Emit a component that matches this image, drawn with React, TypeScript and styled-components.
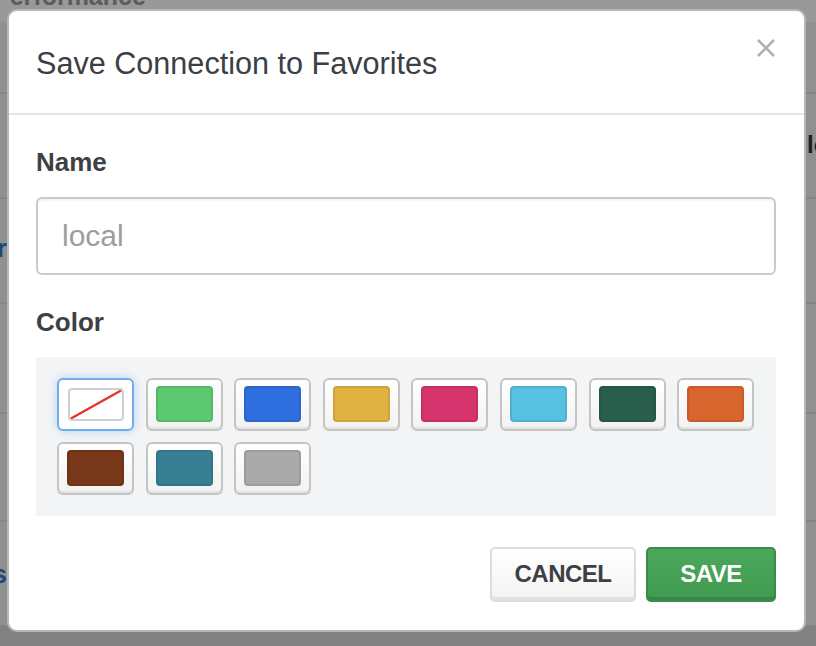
import React from "react";
import styled, { createGlobalStyle } from "styled-components";

const GlobalStyle = createGlobalStyle`
  html, body { margin: 0; padding: 0; width: 816px; height: 646px; overflow: hidden; }
  body { font-family: "Liberation Sans", Arial, Helvetica, sans-serif; background: #fff; }
  * { box-sizing: border-box; }
`;

const Page = styled.div`
  position: relative;
  width: 816px;
  height: 646px;
  overflow: hidden;
  background: #eff0f0;
  display: flex;
  flex-direction: column;
`;

const TopBar = styled.div`
  height: 22px;
  flex: none;
  background: #fff;
  overflow: hidden;
`;

const PageTitle = styled.div`
  margin: -18px 0 0 -7px;
  font-size: 25px;
  line-height: 28px;
  font-weight: 700;
  color: #9a9a9a;
  white-space: nowrap;
`;

const Row = styled.div<{ $h: number; $pad: number }>`
  height: ${(p) => p.$h}px;
  flex: none;
  padding-top: ${(p) => p.$pad}px;
  border-bottom: 2px solid #dcdcdc;
  display: grid;
  grid-template-columns: 7px 800px 1fr;
  align-items: start;
  white-space: nowrap;
`;

const LeftCell = styled.div`
  display: flex;
  justify-content: flex-end;
  width: 7px;
`;

const BlueLink = styled.span`
  font-size: 26px;
  line-height: 30px;
  font-weight: 700;
  color: #3478c6;
`;

const DarkText = styled.span`
  font-size: 24px;
  line-height: 28px;
  font-weight: 700;
  color: #333;
`;

const BottomBand = styled.div`
  flex: 1;
  background: #d8d8d8;
`;

const Overlay = styled.div`
  position: absolute;
  inset: 0;
  background: rgba(0, 0, 0, 0.4);
`;

const Modal = styled.div`
  position: absolute;
  left: 7px;
  top: 9px;
  width: 799px;
  background: #fff;
  border: 2px solid #b6b8b8;
  border-radius: 10px;
  display: flex;
  flex-direction: column;
`;

const Header = styled.div`
  display: flex;
  justify-content: space-between;
  align-items: flex-start;
  padding: 35px 28px 33px 27px;
  border-bottom: 2px solid #e5e5e5;
`;

const Title = styled.h4`
  margin: 0;
  font-size: 30.6px;
  line-height: 34px;
  font-weight: 400;
  color: #3b4045;
`;

const CloseButton = styled.button`
  margin-top: -8px;
  width: 20px;
  height: 20px;
  padding: 0;
  border: 0;
  background: none;
  display: flex;
  color: #b0b0b0;
`;

const Body = styled.div`
  display: flex;
  flex-direction: column;
  padding: 32px 28px 0 27px;
`;

const Label = styled.label`
  font-size: 26px;
  line-height: 30px;
  font-weight: 700;
  color: #3d4145;
  margin-bottom: 20px;
`;

const TextInput = styled.input`
  height: 78px;
  width: 100%;
  border: 2px solid #cacaca;
  border-radius: 6px;
  padding: 0 24px;
  font-family: inherit;
  font-size: 30px;
  color: #555;
  box-shadow: inset 0 2px 2px rgba(0, 0, 0, 0.05);
  margin-bottom: 32px;
  outline: none;
  &::placeholder { color: #9d9d9d; }
`;

const Palette = styled.div`
  background: #f3f4f6;
  padding: 21px 0 21px 21px;
  display: grid;
  grid-template-columns: repeat(8, 77px);
  column-gap: 11.6px;
  row-gap: 11px;
`;

const Swatch = styled.button<{ $selected?: boolean }>`
  width: 77px;
  height: 53px;
  padding: 0 0 1px;
  border-radius: 6px;
  display: flex;
  align-items: center;
  justify-content: center;
  border: 2px solid ${(p) => (p.$selected ? "#6eaeea" : "#c3c5c5")};
  background: ${(p) => (p.$selected ? "#fff" : "linear-gradient(#ffffff, #f2f2f2)")};
  box-shadow: ${(p) =>
    p.$selected ? "0 0 9px rgba(102, 170, 233, 0.45)" : "inset 0 -2px 0 #e3e3e3"};
`;

const Chip = styled.span<{ $color: string }>`
  width: 57px;
  height: 36px;
  border-radius: 4px;
  background: ${(p) => p.$color};
  border: 2px solid rgba(0, 0, 0, 0.08);
`;

const NoneChip = styled.span`
  width: 56px;
  height: 33px;
  border-radius: 4px;
  background: #fff;
  border: 2px solid #d0d0d0;
  display: flex;
  overflow: hidden;
`;

const Footer = styled.div`
  display: flex;
  justify-content: flex-end;
  gap: 10px;
  padding: 31px 28px 28px 27px;
`;

const Button = styled.button<{ $primary?: boolean }>`
  height: 55px;
  width: ${(p) => (p.$primary ? "130px" : "146px")};
  border-radius: 5px;
  font-family: inherit;
  font-size: 24px;
  font-weight: 700;
  letter-spacing: -0.5px;
  padding: 0 0 2px;
  color: ${(p) => (p.$primary ? "#fff" : "#3c4043")};
  border: 2px solid ${(p) => (p.$primary ? "#3b8b49" : "#dcdcdc")};
  background: ${(p) =>
    p.$primary ? "linear-gradient(#4aa85b, #419a51)" : "linear-gradient(#ffffff, #f3f3f3)"};
  box-shadow: ${(p) =>
    p.$primary ? "inset 0 -3px 0 rgba(0,0,0,0.13)" : "inset 0 -3px 0 rgba(0,0,0,0.07)"};
`;

const colors = [
  "#5cc86f",
  "#2f6ede",
  "#dfb241",
  "#d6346d",
  "#57c1e1",
  "#2a5e4c",
  "#d8642e",
  "#77381a",
  "#377f93",
  "#aaaaaa",
];

export default function App() {
  return (
    <>
      <GlobalStyle />
      <Page>
        <TopBar>
          <PageTitle>Performance</PageTitle>
        </TopBar>
        <Row $h={72} $pad={20} />
        <Row $h={105} $pad={37}>
          <LeftCell />
          <span />
          <DarkText>load</DarkText>
        </Row>
        <Row $h={105} $pad={34}>
          <LeftCell>
            <BlueLink>Server</BlueLink>
          </LeftCell>
        </Row>
        <Row $h={110} $pad={34} />
        <Row $h={108} $pad={34} />
        <Row $h={105} $pad={37}>
          <LeftCell>
            <BlueLink>Collections</BlueLink>
          </LeftCell>
        </Row>
        <BottomBand />
        <Overlay />
        <Modal>
          <Header>
            <Title>Save Connection to Favorites</Title>
            <CloseButton aria-label="Close">
              <svg width="20" height="20" viewBox="0 0 20 20">
                <path d="M2 2 L18 18 M18 2 L2 18" stroke="currentColor" strokeWidth="2.6" />
              </svg>
            </CloseButton>
          </Header>
          <Body>
            <Label>Name</Label>
            <TextInput placeholder="local" />
            <Label>Color</Label>
            <Palette>
              <Swatch $selected>
                <NoneChip>
                  <svg width="52" height="29" viewBox="0 0 52 29">
                    <line x1="0" y1="29" x2="52" y2="0" stroke="#e5322a" strokeWidth="2.4" />
                  </svg>
                </NoneChip>
              </Swatch>
              {colors.map((c) => (
                <Swatch key={c}>
                  <Chip $color={c} />
                </Swatch>
              ))}
            </Palette>
          </Body>
          <Footer>
            <Button>CANCEL</Button>
            <Button $primary>SAVE</Button>
          </Footer>
        </Modal>
      </Page>
    </>
  );
}
